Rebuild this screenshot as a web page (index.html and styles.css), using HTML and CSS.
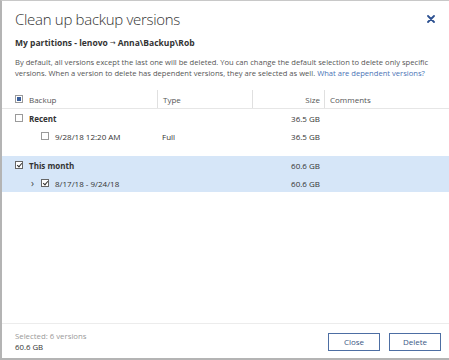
FILE: index.html
```html
<!DOCTYPE html>
<html>
<head>
<meta charset="utf-8">
<link rel="stylesheet" href="styles.css">
</head>
<body>
<div class="dialog">
  <div class="head">
    <h1 class="title">Clean up backup versions</h1>
    <span class="close" aria-label="Close">
      <svg width="8" height="8" viewBox="0 0 8 8"><path d="M1 1L7 7M7 1L1 7" stroke="#2d5191" stroke-width="1.8" stroke-linecap="round"/></svg>
    </span>
  </div>
  <div class="path">My partitions - lenovo<span class="arrow">→</span>Anna\Backup\Rob</div>
  <p class="desc">By default, all versions except the last one will be deleted. You can change the default selection to delete only specific versions. When a version to delete has dependent versions, they are selected as well. <a class="link">What are dependent versions?</a></p>

  <div class="table">
    <div class="row hdr">
      <div class="cell c1"><span class="cb ind"></span>Backup</div>
      <div class="cell c2">Type</div>
      <div class="cell c3">Size</div>
      <div class="cell c4">Comments</div>
    </div>
    <div class="group">
      <div class="row">
        <div class="cell c1 bold"><span class="cb"></span>Recent</div>
        <div class="cell c2"></div>
        <div class="cell c3">36.5 GB</div>
        <div class="cell c4"></div>
      </div>
      <div class="row">
        <div class="cell c1 child"><span class="cb"></span>9/28/18 12:20 AM</div>
        <div class="cell c2">Full</div>
        <div class="cell c3">36.5 GB</div>
        <div class="cell c4"></div>
      </div>
    </div>
    <div class="group sel">
      <div class="row">
        <div class="cell c1 bold"><span class="cb on"></span>This month</div>
        <div class="cell c2"></div>
        <div class="cell c3">60.6 GB</div>
        <div class="cell c4"></div>
      </div>
      <div class="row">
        <div class="cell c1 child exp"><span class="chev">›</span><span class="cb on"></span>8/17/18 - 9/24/18</div>
        <div class="cell c2"></div>
        <div class="cell c3">60.6 GB</div>
        <div class="cell c4"></div>
      </div>
    </div>
  </div>

  <div class="foot">
    <div class="summary">
      <div class="sel-count">Selected: 6 versions</div>
      <div class="sel-size">60.6 GB</div>
    </div>
    <div class="buttons">
      <button class="btn">Close</button>
      <button class="btn">Delete</button>
    </div>
  </div>
</div>
</body>
</html>
```
FILE: styles.css
```css
html, body {
  margin: 0;
  padding: 0;
  background: #ffffff;
}
body {
  width: 449px;
  height: 360px;
  overflow: hidden;
  font-family: "Open Sans", "Noto Sans", sans-serif;
  color: #333;
}
.dialog {
  box-sizing: border-box;
  width: 449px;
  height: 360px;
  border-left: 2px solid #b4b4b4;
  border-top: 1px solid #c8c8c8;
  border-bottom: 2px solid #b4b4b4;
  display: flex;
  flex-direction: column;
}
.head {
  display: flex;
  justify-content: space-between;
  align-items: center;
  padding: 8px 14px 0 13px;
  height: 20px;
}
.title {
  margin: 0;
  font-size: 15px;
  font-weight: 300;
  color: #333;
  letter-spacing: -0.3px;
}
.close {
  display: flex;
  width: 8px;
  height: 8px;
}
.path {
  margin: 8px 0 0 13px;
  font-size: 8.5px;
  font-weight: 700;
  color: #333;
  display: flex;
  align-items: center;
  white-space: pre;
}
.arrow {
  font-family: "DejaVu Sans", sans-serif;
  font-weight: 400;
  font-size: 7px;
  margin: 0 2px;
}
.desc {
  margin: 9px 10px 0 13px;
  font-size: 7.6px;
  line-height: 11px;
  color: #555;
}
.link {
  color: #4a73b5;
}
.table {
  margin-top: 11px;
  font-size: 8px;
  color: #333;
}
.row {
  display: grid;
  grid-template-columns: 155px 95px 72px 1fr;
  height: 18px;
  align-items: center;
}
.hdr {
  height: 18px;
  border-bottom: 1px solid #e6e6e6;
  color: #555;
}
.hdr .cell {
  height: 100%;
  display: flex;
  align-items: center;
}
.hdr .c2, .hdr .c3, .hdr .c4 {
  border-left: 1px solid #e0e0e0;
}
.cell {
  display: flex;
  align-items: center;
  padding: 0 5px;
  white-space: nowrap;
}
.c1 {
  padding-left: 13px;
}
.c3 {
  justify-content: flex-end;
  padding-right: 4px;
}
.bold {
  font-weight: 700;
}
.child {
  padding-left: 39px;
}
.child.exp {
  padding-left: 29px;
}
.chev {
  width: 10px;
  font-size: 10px;
  color: #444;
  line-height: 1;
}
.cb {
  box-sizing: border-box;
  width: 8px;
  height: 8px;
  border: 1px solid #9a9a9a;
  background: #fff;
  margin-right: 6px;
  position: relative;
  flex: none;
}
.cb.ind::after {
  content: "";
  position: absolute;
  left: 1px;
  top: 1px;
  width: 4px;
  height: 4px;
  background: #3a5f9c;
}
.cb.on {
  border-color: #666;
}
.cb.on::after {
  content: "";
  position: absolute;
  left: 1.5px;
  top: 0px;
  width: 2px;
  height: 4px;
  border-right: 1px solid #333;
  border-bottom: 1px solid #333;
  transform: rotate(40deg);
}
.group + .group {
  margin-top: 11px;
}
.sel {
  background: #d6e6f8;
}
.foot {
  box-sizing: border-box;
  margin-top: auto;
  border-top: 1px solid #ececec;
  display: flex;
  justify-content: space-between;
  align-items: center;
  padding: 1px 8px 0 13px;
  height: 35px;
}
.summary {
  font-size: 7.8px;
  line-height: 11px;
}
.sel-count {
  color: #999;
}
.sel-size {
  color: #333;
}
.buttons {
  display: flex;
  gap: 9px;
}
.btn {
  box-sizing: border-box;
  width: 52px;
  height: 18px;
  border: 1px solid #4d6ea3;
  background: #fff;
  color: #3a5684;
  font-family: inherit;
  font-size: 8px;
  padding: 0;
}
```
